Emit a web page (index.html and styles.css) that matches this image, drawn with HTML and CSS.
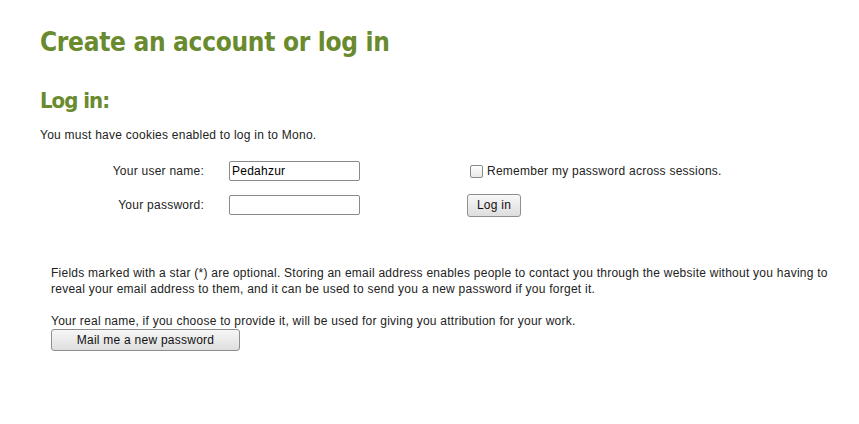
FILE: index.html
```html
<!DOCTYPE html>
<html>
<head>
<meta charset="utf-8">
<link rel="stylesheet" href="styles.css">
</head>
<body>
<div class="page">
  <h1 class="title">Create an account or log in</h1>
  <h2 class="subtitle">Log in:</h2>
  <p class="note">You must have cookies enabled to log in to Mono.</p>
  <form class="login">
    <div class="row">
      <label class="label">Your user name:</label>
      <input class="field" type="text" value="Pedahzur">
      <label class="remember"><span class="box"></span>Remember my password across sessions.</label>
    </div>
    <div class="row">
      <label class="label">Your password:</label>
      <input class="field" type="password">
      <button class="btn login-btn" type="button">Log in</button>
    </div>
  </form>
  <div class="info">
    <p class="para">Fields marked with a star (*) are optional. Storing an email address enables people to contact you through the website without you having to reveal your email address to them, and it can be used to send you a new password if you forget it.</p>
    <p class="para second">Your real name, if you choose to provide it, will be used for giving you attribution for your work.</p>
    <button class="btn mail-btn" type="button">Mail me a new password</button>
  </div>
</div>
</body>
</html>
```

FILE: styles.css
```css
html, body {
  margin: 0;
  padding: 0;
  background: #ffffff;
}
body {
  font-family: "Liberation Sans", Arial, sans-serif;
  font-size: 12px;
  color: #222222;
}
.page {
  padding: 24px 0 0 40px;
}
.title {
  margin: 0;
  font-family: "DejaVu Sans Condensed", "DejaVu Sans", sans-serif;
  font-weight: bold;
  font-size: 26px;
  letter-spacing: -0.3px;
  line-height: 36px;
  color: #6a8a2e;
}
.subtitle {
  margin: 27px 0 0;
  font-family: "DejaVu Sans Condensed", "DejaVu Sans", sans-serif;
  font-weight: bold;
  font-size: 22px;
  letter-spacing: -1px;
  line-height: 28px;
  color: #6a8a2e;
}
.note {
  margin: 12px 0 0;
  line-height: 16px;
  letter-spacing: 0.25px;
}
.login {
  margin-top: 18px;
  display: flex;
  flex-direction: column;
  gap: 14px;
}
.row {
  display: flex;
  align-items: center;
  height: 20px;
}
.label {
  width: 164px;
  text-align: right;
  letter-spacing: 0.25px;
}
.field {
  margin-left: 25px;
  width: 131px;
  height: 20px;
  box-sizing: border-box;
  border: 1px solid #8a8a8a;
  border-radius: 2px;
  padding: 1px 2px;
  font-family: "Liberation Sans", Arial, sans-serif;
  font-size: 12px;
  letter-spacing: 0.25px;
  color: #000;
}
.remember {
  margin-left: 110px;
  display: flex;
  align-items: center;
  letter-spacing: 0.25px;
}
.box {
  width: 11px;
  height: 11px;
  border: 1px solid #8a8a8a;
  border-radius: 2px;
  background: linear-gradient(#ffffff, #e8e8e8);
  margin-right: 4px;
}
.btn {
  font-family: "Liberation Sans", Arial, sans-serif;
  font-size: 12px;
  color: #111;
  border: 1px solid #8f8f8f;
  border-radius: 3px;
  background: linear-gradient(#f7f7f7, #dedede);
  padding: 0;
  letter-spacing: 0.25px;
}
.login-btn {
  margin-left: 107px;
  width: 54px;
  height: 23px;
}
.info {
  margin: 50px 0 0 11px;
}
.para {
  margin: 0;
  line-height: 16px;
  letter-spacing: 0.25px;
  width: 800px;
}
.second {
  margin-top: 16px;
}
.mail-btn {
  display: block;
  width: 189px;
  height: 22px;
}
```
